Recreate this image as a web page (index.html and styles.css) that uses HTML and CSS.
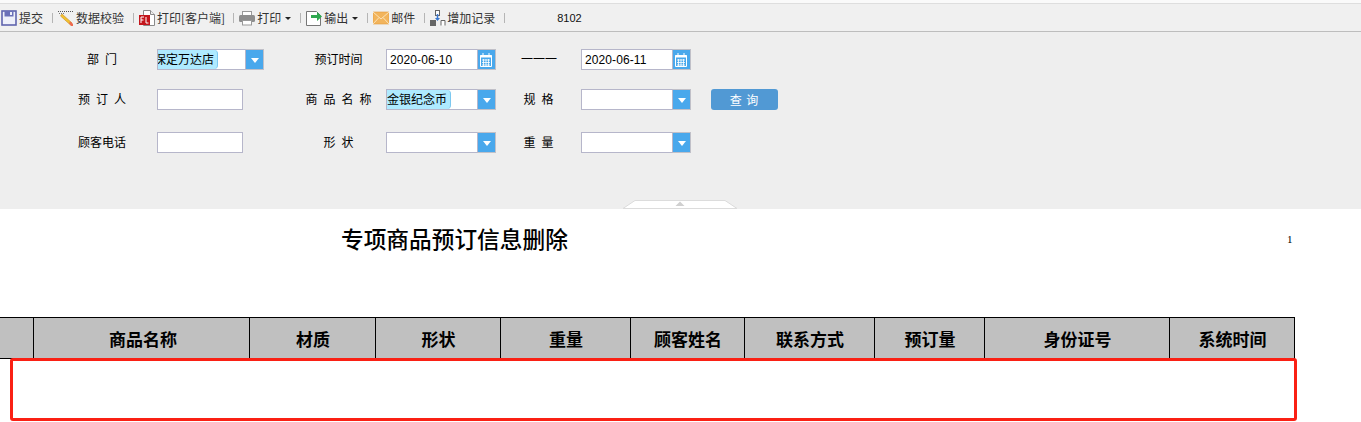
FILE: index.html
```html
<!DOCTYPE html>
<html lang="zh-CN">
<head>
<meta charset="utf-8">
<title>专项商品预订信息删除</title>
<link rel="stylesheet" href="styles.css">
</head>
<body>
<div class="toolbar">
  <span class="tool t-submit">
    <svg class="icon" viewBox="0 0 16 16"><rect x="1" y="1" width="14" height="14" fill="#eef0fa" stroke="#5f64ae" stroke-width="1.600"/><rect x="3.500" y="1" width="9" height="5.500" fill="#6a70b8"/><rect x="9" y="2" width="2" height="3" fill="#eef0fa"/></svg>
    <span>提交</span>
  </span>
  <i class="sep"></i>
  <span class="tool t-check">
    <svg class="icon" viewBox="0 0 16 16"><path d="M0 1.500h16" stroke="#555" stroke-dasharray="1 1"/><path d="M1 3.500h6" stroke="#777" stroke-dasharray="1 1"/><path d="M4 4l10 9-1.500 2L2.500 6z" fill="#f2c230" stroke="#c88a20" stroke-width=".6"/><path d="M12.500 11.500l2.500 2.500v2h-2l-2-3z" fill="#ee6a50"/></svg>
    <span>数据校验</span>
  </span>
  <i class="sep"></i>
  <span class="tool t-client">
    <svg class="icon" viewBox="0 0 16 16"><path d="M4.500 .5h7l4 4v11h-11z" fill="#fff" stroke="#8a8a8a"/><path d="M11.500 .5v4h4" fill="#eee" stroke="#8a8a8a"/><rect x="0" y="5" width="11" height="10" fill="#c4161c"/><path d="M2 7v6M2 7h3M2 10h2.500M7 7v6h2.500" stroke="#fff" fill="none"/></svg>
    <span class="client-label">打印[客户端]</span>
  </span>
  <i class="sep"></i>
  <span class="tool t-print">
    <svg class="icon" viewBox="0 0 16 16"><rect x="3.500" y="1.500" width="9" height="5" fill="#fff" stroke="#999"/><rect x="0" y="5" width="16" height="7" rx="1.500" fill="#8e8e8e"/><rect x="3.500" y="10.500" width="9" height="4.500" fill="#fff" stroke="#999"/></svg>
    <span>打印</span>
    <b class="caret"></b>
  </span>
  <i class="sep"></i>
  <span class="tool t-export">
    <svg class="icon" viewBox="0 0 16 16"><path d="M.5 1.500h10l4 4v10H.5z" fill="#fff" stroke="#777"/><path d="M5 5h6V2l5 4.500-5 4.500V8H5z" fill="#2fa84f"/></svg>
    <span>输出</span>
    <b class="caret"></b>
  </span>
  <i class="sep"></i>
  <span class="tool t-mail">
    <svg class="icon" viewBox="0 0 16 16"><rect x="0" y="2" width="16" height="12" fill="#f2b45c" stroke="#e09a3c" stroke-width=".6"/><path d="M0 2l8 7 8-7M0 14l6-6.500M16 14l-6-6.500" fill="none" stroke="#fbe3b8"/></svg>
    <span>邮件</span>
  </span>
  <i class="sep"></i>
  <span class="tool t-add">
    <svg class="icon" viewBox="0 0 16 16"><rect x="5.500" y="0.500" width="4" height="5" fill="#fff" stroke="#666"/><path d="M7.500 4v6" stroke="#3a78d0" stroke-width="1.500"/><path d="M5 8h5l-2.500 3z" fill="#3a78d0"/><rect x="0" y="10" width="6" height="6" fill="#666"/><path d="M11 15.500v-5h4v5" fill="#fff" stroke="#666"/></svg>
    <span>增加记录</span>
  </span>
  <i class="sep last"></i>
  <span class="user-code">8102</span>
</div>

<section class="panel">
  <div class="form">
    <label class="lab lab1"><span class="wide">部门</span></label>
    <div class="combo c1">
      <span class="field"><span class="chosen chosen-clip"><span>保定万达店</span></span></span>
      <span class="btn"><b class="down"></b></span>
    </div>
    <label class="lab lab2">预订时间</label>
    <div class="combo c2">
      <span class="field date">2020-06-10</span>
      <span class="btn"><svg class="cal" viewBox="0 0 12 14"><path d="M.5 2.500h11v11H.5z" fill="none" stroke="#fff"/><path d="M.5 2h11v2.500H.5z" fill="#fff"/><path d="M3 0v2M9 0v2" stroke="#fff"/><path d="M2 7h8M2 9.500h8M2 12h8M3.500 6v7M6 6v7M8.500 6v7" stroke="#fff" stroke-width=".8"/></svg></span>
    </div>
    <label class="lab lab3">一一一</label>
    <div class="combo c2">
      <span class="field date">2020-06-11</span>
      <span class="btn"><svg class="cal" viewBox="0 0 12 14"><path d="M.5 2.500h11v11H.5z" fill="none" stroke="#fff"/><path d="M.5 2h11v2.500H.5z" fill="#fff"/><path d="M3 0v2M9 0v2" stroke="#fff"/><path d="M2 7h8M2 9.500h8M2 12h8M3.500 6v7M6 6v7M8.500 6v7" stroke="#fff" stroke-width=".8"/></svg></span>
    </div>
    <span></span>

    <label class="lab lab1"><span class="wide">预订人</span></label>
    <span class="field plain"></span>
    <label class="lab lab2"><span class="wide">商品名称</span></label>
    <div class="combo c2">
      <span class="field"><span class="chosen"><span>金银纪念币</span></span></span>
      <span class="btn"><b class="down"></b></span>
    </div>
    <label class="lab lab3"><span class="wide">规格</span></label>
    <div class="combo c2">
      <span class="field"></span>
      <span class="btn"><b class="down"></b></span>
    </div>
    <button class="query" type="button">查 询</button>

    <label class="lab lab1">顾客电话</label>
    <span class="field plain"></span>
    <label class="lab lab2"><span class="wide">形状</span></label>
    <div class="combo c2">
      <span class="field"></span>
      <span class="btn"><b class="down"></b></span>
    </div>
    <label class="lab lab3"><span class="wide">重量</span></label>
    <div class="combo c2">
      <span class="field"></span>
      <span class="btn"><b class="down"></b></span>
    </div>
    <span></span>
  </div>
  <svg class="collapse" viewBox="0 0 114 9"><path d="M0 8.500L12 .5h90l12 8z" fill="#fff" stroke="#dcdcdc"/><path d="M57 1.500l4.500 4.500h-9z" fill="#d0d0d0"/></svg>
</section>

<section class="report">
  <div class="title-row">
    <h1 class="title">专项商品预订信息删除</h1>
    <span class="page-no">1</span>
  </div>
  <table class="grid">
    <colgroup>
      <col class="w0"><col class="w1"><col class="w2"><col class="w3"><col class="w4"><col class="w5"><col class="w6"><col class="w7"><col class="w8"><col class="w9">
    </colgroup>
    <tr>
      <th class="first"></th><th class="name">商品名称</th><th>材质</th><th>形状</th><th>重量</th><th>顾客姓名</th><th>联系方式</th><th>预订量</th><th>身份证号</th><th>系统时间</th>
    </tr>
  </table>
  <div class="mark"></div>
</section>
</body>
</html>
```
FILE: styles.css
```css
* { box-sizing: border-box; }
html, body { margin: 0; padding: 0; }
body {
  width: 1361px;
  height: 422px;
  overflow: hidden;
  background: #fff;
  color: #000;
  font-family: "Noto Sans CJK SC", "Liberation Sans", sans-serif;
  font-size: 12px;
}

/* toolbar */
.toolbar {
  display: flex;
  align-items: center;
  height: 32px;
  padding: 2px 0 0 1px;
  background: #f0f0f0;
  border-top: 3px solid #fafafa;
  border-bottom: 1px solid #bdbdbd;
  box-shadow: inset 0 1px 0 #dedede;
  color: #333;
}
.tool { display: flex; align-items: center; flex: none; }
.tool span { line-height: 16px; }
.icon { width: 16px; height: 16px; flex: none; margin-right: 2px; }
.t-add .icon { margin-right: 1px; }
.client-label { margin-right: -1px; }
.sep { flex: none; width: 1px; height: 10px; margin: 0 5px 0 9px; background: #b5b5b5; }
.sep.last { margin-right: 52px; }
.caret {
  width: 0;
  height: 0;
  margin-left: 4px;
  border: 3px solid transparent;
  border-top: 3px solid #222;
  border-bottom: 0;
}
.user-code { font-family: "Liberation Sans", sans-serif; font-size: 11px; color: #111; }

/* query panel */
.panel {
  position: relative;
  height: 177px;
  padding-top: 17px;
  background: #eeeeee;
}
.form {
  display: grid;
  grid-template-columns: 157px 148px 81px 135px 60px 130px 67px;
  grid-template-rows: 40px 43px 21px;
  align-items: start;
}
.lab {
  height: 21px;
  line-height: 19px;
  text-align: center;
  white-space: nowrap;
}
.lab1 { padding: 0 30px 0 77px; }
.lab2 { padding-right: 14px; }
.lab3 { padding-right: 25px; }
.wide { letter-spacing: 6px; margin-right: -6px; }

.combo { display: flex; height: 21px; }
.c1 { width: 107px; }
.c2 { width: 110px; }
.field {
  display: block;
  flex: 1;
  height: 21px;
  min-width: 0;
  overflow: hidden;
  background: #fff;
  border: 1px solid #b6b6ca;
  border-right: 0;
  white-space: nowrap;
}
.plain { width: 86px; flex: none; border-right: 1px solid #b6b6ca; }
.date {
  padding-left: 3px;
  font-family: "Liberation Sans", sans-serif;
  line-height: 20px;
  letter-spacing: 0.1px;
}
.chosen {
  display: inline-block;
  width: 64px;
  height: 19px;
  line-height: 18px;
  overflow: hidden;
  background: #aeeaff;
  border-right: 1px solid #7cc8f0;
  border-radius: 0 4px 4px 0;
}
.chosen-clip { width: 60px; }
.chosen-clip span { margin-left: -4px; }
.btn {
  display: flex;
  flex: none;
  align-items: center;
  justify-content: center;
  width: 19px;
  height: 21px;
  background: #49a8ec;
  border: 1px solid #c0c0c8;
  border-left: 1px solid #b6b6ca;
}
.down {
  width: 0;
  height: 0;
  margin-top: 1px;
  border: 4px solid transparent;
  border-top: 5px solid #fff;
  border-bottom: 0;
}
.cal { width: 12px; height: 14px; margin-right: 1px; }
.query {
  width: 67px;
  height: 21px;
  padding: 0;
  border: 0;
  border-radius: 3px;
  background: #5199d4;
  color: #fff;
  font: inherit;
  letter-spacing: 1px;
}
.collapse {
  position: absolute;
  left: 623px;
  bottom: 0;
  width: 114px;
  height: 9px;
}

/* report */
.report { position: relative; }
.title-row {
  display: flex;
  align-items: center;
  height: 60px;
  padding: 0 0 0 341px;
}
.title {
  margin: 0;
  width: 946px;
  font-size: 22.7px;
  font-weight: 500;
  line-height: 60px;
  white-space: nowrap;
}
.page-no { font-family: "Liberation Serif", serif; font-size: 11px; }
.grid {
  width: 1294px;
  margin-top: 48px;
  table-layout: fixed;
  border-collapse: collapse;
}
.w0 { width: 33px; } .w1 { width: 216px; } .w2 { width: 126px; } .w3 { width: 125px; } .w4 { width: 130px; }
.w5 { width: 114px; } .w6 { width: 130px; } .w7 { width: 110px; } .w8 { width: 185px; } .w9 { width: 125px; }
.grid th {
  height: 41px;
  padding: 0 0 0 2px;
  background: #c0c0c0;
  border: 1px solid #000;
  font-size: 17px;
  font-weight: 700;
  text-align: center;
}
.grid th.name { padding-left: 4px; }
.grid th.first { border-left: 0; padding: 0; }
.mark {
  position: absolute;
  left: 10px;
  top: 149px;
  width: 1287px;
  height: 63px;
  border: 3px solid #fa2014;
  border-radius: 3px;
}
```
